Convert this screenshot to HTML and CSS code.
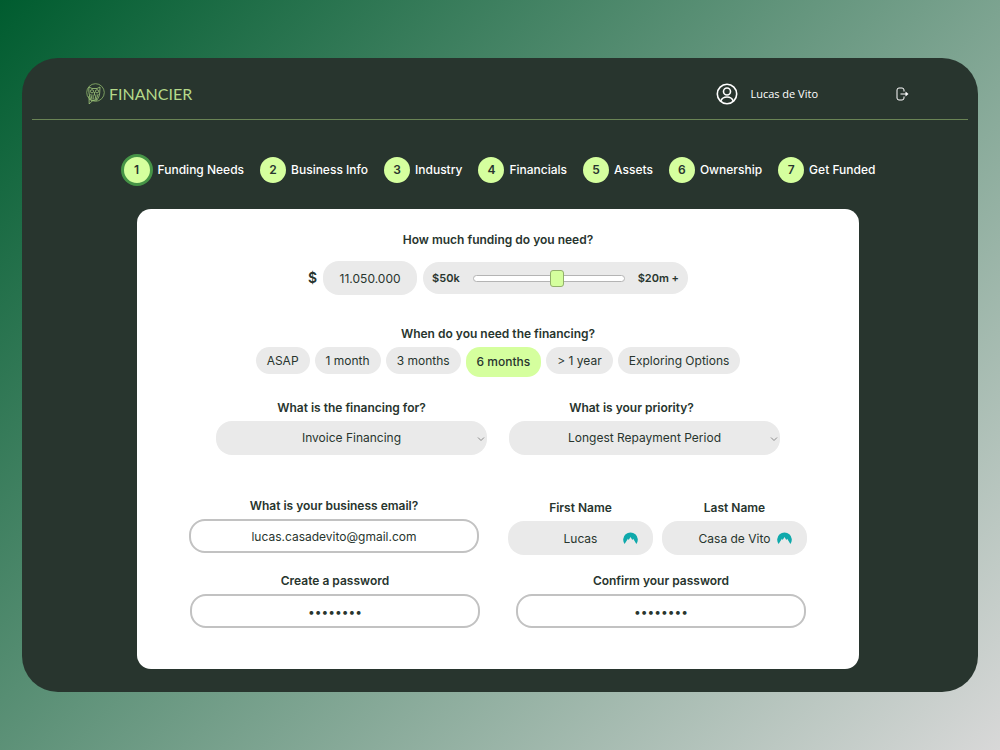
FILE: index.html
```html
<!DOCTYPE html>
<html lang="en">
<head>
<meta charset="utf-8">
<meta name="viewport" content="width=device-width, initial-scale=1">
<title>Financier – Funding Needs</title>
<link rel="stylesheet" href="styles.css">
</head>
<body>
<div class="shell">
  <header class="topbar">
    <a class="brand" href="#">
      <svg class="brand-mark" viewBox="0 0 20 22" aria-hidden="true">
        <circle cx="10.500" cy="9.500" r="8.800"/>
        <path class="owl" d="M4 4l3 1.500h5L15 4l-.3 6c-.2 3-1.500 5.500-3.200 7.500M4 4c-.6 4 .2 8 1.500 12M9.500 9v3.500M5.800 11l1.200 5.500M8 11.500l.3 5M11 11.500l-1 5.500M13.200 11l-2.200 6M4 13l.2 8 3.300-3.300 4-.7M4.300 16.500l3.200 1"/>
        <circle class="owl" cx="7" cy="8.300" r="1.600"/>
        <circle class="owl" cx="12" cy="8.300" r="1.600"/>
      </svg>
      <span class="brand-name">FINANCIER</span>
    </a>
    <div class="account">
      <svg class="avatar" viewBox="0 0 22 22" aria-hidden="true">
        <circle cx="11" cy="11" r="9.700"/>
        <circle cx="11" cy="8.500" r="3.500"/>
        <path d="M4.800 18c1-2.800 3.300-4 6.200-4s5.200 1.200 6.200 4"/>
      </svg>
      <span class="account-name">Lucas de Vito</span>
      <button class="logout" type="button" aria-label="Log out">
        <svg viewBox="0 0 13 14" aria-hidden="true">
          <path d="M8 4.500V3a2 2 0 0 0-2-2H3a2 2 0 0 0-2 2v8a2 2 0 0 0 2 2h3a2 2 0 0 0 2-2V9.500M4.500 7h6"/>
          <path class="arrow-head" d="M9.500 4.500L12.500 7l-3 2.500z"/>
        </svg>
      </button>
    </div>
  </header>

  <main class="content">
    <ol class="steps">
      <li class="step step-current" aria-current="step"><span class="step-number">1</span>Funding Needs</li>
      <li class="step"><span class="step-number">2</span>Business Info</li>
      <li class="step"><span class="step-number">3</span>Industry</li>
      <li class="step"><span class="step-number">4</span>Financials</li>
      <li class="step"><span class="step-number">5</span>Assets</li>
      <li class="step"><span class="step-number">6</span>Ownership</li>
      <li class="step"><span class="step-number">7</span>Get Funded</li>
    </ol>

    <form class="card">
      <section class="amount">
        <label class="label" for="amount">How much funding do you need?</label>
        <div class="amount-row">
          <span class="currency">$</span>
          <input class="field field-amount" id="amount" type="text" value="11.050.000">
          <div class="slider">
            <span>$50k</span>
            <input class="range" type="range" min="50" max="20000" step="50" value="11300" aria-label="Funding amount">
            <span>$20m +</span>
          </div>
        </div>
      </section>

      <section class="timing">
        <h2 class="label">When do you need the financing?</h2>
        <div class="chips">
          <button class="chip" type="button">ASAP</button>
          <button class="chip" type="button">1 month</button>
          <button class="chip" type="button">3 months</button>
          <button class="chip chip-active" type="button" aria-pressed="true">6 months</button>
          <button class="chip" type="button">&gt; 1 year</button>
          <button class="chip" type="button">Exploring Options</button>
        </div>
      </section>

      <section class="row row-purpose">
        <div class="group">
          <label class="label" for="purpose">What is the financing for?</label>
          <div class="select-wrap">
            <select class="field" id="purpose"><option>Invoice Financing</option></select>
            <svg class="chevron" viewBox="0 0 8 6" aria-hidden="true"><path d="M1 1.500l3 3 3-3"/></svg>
          </div>
        </div>
        <div class="group group-priority">
          <label class="label" for="priority">What is your priority?</label>
          <div class="select-wrap">
            <select class="field" id="priority"><option>Longest Repayment Period</option></select>
            <svg class="chevron" viewBox="0 0 8 6" aria-hidden="true"><path d="M1 1.500l3 3 3-3"/></svg>
          </div>
        </div>
      </section>

      <section class="row row-contact">
        <div class="group">
          <label class="label" for="email">What is your business email?</label>
          <input class="field field-outline" id="email" type="email" value="lucas.casadevito@gmail.com">
        </div>
        <div class="names">
          <div class="group">
            <label class="label" for="first">First Name</label>
            <div class="name-wrap">
              <input class="field" id="first" type="text" value="Lucas">
              <svg class="autofill" viewBox="0 0 15 13" aria-hidden="true"><path d="M1.600 12A7.300 7.300 0 1 1 13.400 12L10.200 6.700 9.300 8.100 7.500 4.900 5.700 8 4.900 6.700z"/></svg>
            </div>
          </div>
          <div class="group">
            <label class="label" for="last">Last Name</label>
            <div class="name-wrap">
              <input class="field" id="last" type="text" value="Casa de Vito">
              <svg class="autofill" viewBox="0 0 15 13" aria-hidden="true"><path d="M1.600 12A7.300 7.300 0 1 1 13.400 12L10.200 6.700 9.300 8.100 7.500 4.900 5.700 8 4.900 6.700z"/></svg>
            </div>
          </div>
        </div>
      </section>

      <section class="row row-password">
        <div class="group">
          <label class="label" for="password">Create a password</label>
          <input class="field field-outline" id="password" type="password" value="password">
        </div>
        <div class="group">
          <label class="label" for="confirm">Confirm your password</label>
          <input class="field field-outline" id="confirm" type="password" value="password">
        </div>
      </section>
    </form>
  </main>
</div>
</body>
</html>
```
FILE: styles.css
```css
* {
  box-sizing: border-box;
}

body {
  margin: 0;
  min-height: 100vh;
  padding: 58px 22px;
  background: linear-gradient(135deg, #005c2f 0%, #d8d8d8 100%);
  color: #28352e;
  font-family: Inter, "Liberation Sans", sans-serif;
  font-size: 12px;
  line-height: 16px;
}

button,
input,
select {
  margin: 0;
  border: 0;
  color: inherit;
  font: inherit;
}

.shell {
  padding: 0 10px 23px;
  border-radius: 36px;
  background: #28352e;
}

.topbar {
  display: flex;
  align-items: center;
  justify-content: space-between;
  height: 62px;
  padding: 11px 59px 0 53px;
  border-bottom: 1px solid #6a8455;
}

.brand {
  display: flex;
  align-items: center;
  gap: 4px;
  color: #b5d98a;
  text-decoration: none;
}

.brand-mark {
  width: 20px;
  height: 22px;
  fill: none;
  stroke: #8fb86c;
  stroke-width: 0.8;
}

.owl {
  stroke: #a5cd7e;
}

.brand-name {
  font-family: Lato, sans-serif;
  font-size: 16px;
}

.account {
  display: flex;
  align-items: center;
  color: #fff;
}

.avatar {
  width: 22px;
  height: 22px;
  fill: none;
  stroke: #fff;
  stroke-width: 1.6;
}

.account-name {
  margin: 0 78px 0 12px;
  font-family: "Open Sans", sans-serif;
  font-size: 11px;
}

.logout {
  display: flex;
  padding: 0;
  background: none;
}

.logout svg {
  width: 13px;
  height: 14px;
  fill: none;
  stroke: #fff;
  stroke-width: 1;
}

.logout .arrow-head {
  fill: #fff;
  stroke: none;
}

.content {
  padding-right: 4px;
}

.steps {
  display: flex;
  justify-content: center;
  gap: 16px;
  margin: 0;
  padding: 33px 0 23px;
  list-style: none;
}

.step {
  display: flex;
  align-items: center;
  gap: 5px;
  height: 33px;
  color: #fff;
  font-weight: 500;
}

.step-number {
  display: grid;
  place-items: center;
  width: 26px;
  height: 26px;
  border-radius: 50%;
  background: #d5ff9e;
  color: #28352e;
  font-weight: 600;
}

.step-current .step-number {
  width: 32px;
  height: 32px;
  border: 3px solid #469447;
}

.card {
  width: 77.4%;
  margin: 0 auto;
  padding: 23px 48px 41px;
  border-radius: 14px;
  background: #fff;
}

.label {
  display: block;
  margin: 0;
  font-size: 12px;
  font-weight: 600;
  text-align: center;
}

.field {
  display: block;
  width: 100%;
  height: 34px;
  padding: 0 12px;
  border-radius: 16px;
  background: #eaeaea;
  text-align: center;
}

.field-outline {
  border: 2px solid #c2c2c2;
  background: #fff;
}

.amount-row {
  display: flex;
  align-items: center;
  justify-content: center;
  gap: 6px;
  margin-top: 13px;
}

.currency {
  font-size: 14px;
  font-weight: 600;
}

.field-amount {
  width: 94px;
}

.slider {
  display: flex;
  align-items: center;
  gap: 13px;
  height: 32px;
  padding: 0 9px;
  border-radius: 16px;
  background: #eaeaea;
  font-size: 11px;
  font-weight: 600;
}

.range {
  width: 152px;
  height: 18px;
  background: none;
  appearance: none;
}

.range::-webkit-slider-runnable-track {
  height: 7px;
  border: 1px solid #b4b4b4;
  border-radius: 4px;
  background: #fff;
}

.range::-webkit-slider-thumb {
  width: 14px;
  height: 17px;
  margin-top: -6px;
  border: 1px solid #93b06c;
  border-radius: 3px;
  background: #d5ff9e;
  appearance: none;
}

.timing {
  margin-top: 31px;
}

.chips {
  display: flex;
  align-items: flex-start;
  justify-content: center;
  gap: 5px;
  height: 30px;
  margin-top: 5px;
}

.chip {
  height: 27px;
  padding: 0 11px;
  border-radius: 14px;
  background: #eaeaea;
}

.chip-active {
  height: 30px;
  background: #d5ff9e;
  font-weight: 500;
}

.row {
  display: grid;
  justify-content: center;
}

.group .label {
  margin-bottom: 5px;
}

.row-purpose {
  grid-template-columns: 271px 271px;
  gap: 22px;
  margin-top: 23px;
}

.group-priority .label {
  padding-right: 26px;
}

.row-contact {
  grid-template-columns: 290px 299px;
  gap: 29px;
  margin-top: 43px;
}

.row-password {
  grid-template-columns: 290px 290px;
  gap: 36px;
  margin-top: 18px;
}

.names {
  display: grid;
  grid-template-columns: 1fr 1fr;
  gap: 9px;
  padding-top: 2px;
}

.select-wrap,
.name-wrap {
  position: relative;
}

select.field {
  appearance: none;
  text-align-last: center;
}

.chevron {
  position: absolute;
  top: 15px;
  right: 2px;
  width: 8px;
  height: 6px;
  fill: none;
  stroke: #8a8a8a;
  pointer-events: none;
}

.autofill {
  position: absolute;
  top: 11px;
  right: 15px;
  width: 15px;
  height: 13px;
  fill: #0fa9ab;
}
```
